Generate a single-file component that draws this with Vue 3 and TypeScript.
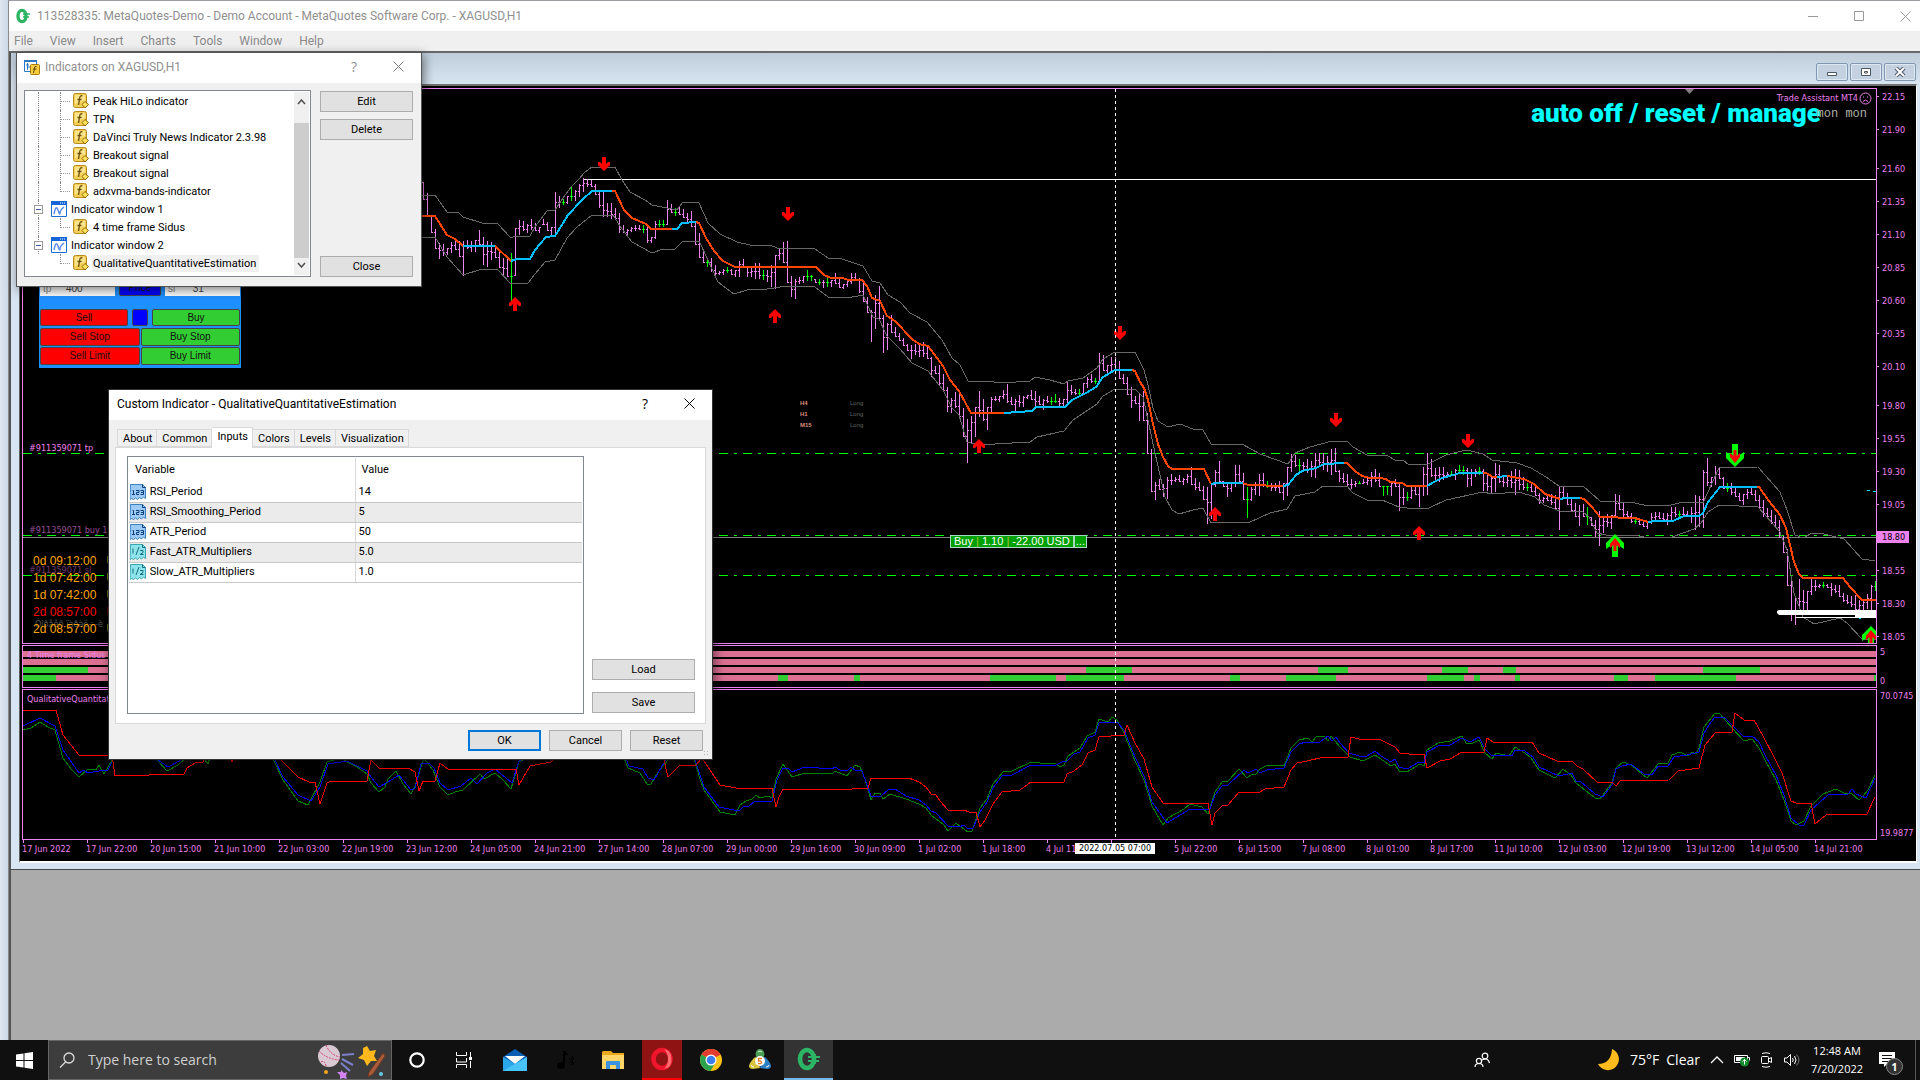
<script setup lang="ts">
import { ref } from 'vue'

type Run = [colour: 'down' | 'up', points: string]

const menus = ['File', 'View', 'Insert', 'Charts', 'Tools', 'Window', 'Help']

const priceLabels = [
  '22.15', '21.90', '21.60', '21.35', '21.10', '20.85', '20.60', '20.35', '20.10',
  '19.80', '19.55', '19.30', '19.05', '18.80', '18.55', '18.30', '18.05',
]
const wideSteps = ['21.60', '19.80']

const timeLabels = [
  '17 Jun 2022', '17 Jun 22:00', '20 Jun 15:00', '21 Jun 10:00', '22 Jun 03:00', '22 Jun 19:00',
  '23 Jun 12:00', '24 Jun 05:00', '24 Jun 21:00', '27 Jun 14:00', '28 Jun 07:00', '29 Jun 00:00',
  '29 Jun 16:00', '30 Jun 09:00', '1 Jul 02:00', '1 Jul 18:00', '4 Jul 11:00', '', '5 Jul 22:00',
  '6 Jul 15:00', '7 Jul 08:00', '8 Jul 01:00', '8 Jul 17:00', '11 Jul 10:00', '12 Jul 03:00',
  '12 Jul 19:00', '13 Jul 12:00', '14 Jul 05:00', '14 Jul 21:00',
]

// High-low pairs, one bar every four units; "g" marks a doji bar.
const barData = `182-200 193-216 216-233 229-249 243-259 244-256 248-255 242-253 240-250 241-257 241-276 240-249
241-252 240-252 230-245 237-265 241-267 242-260 245-258 250-268 258-275 258-277 253-301g 228-276 220-235 221-231
224-233 219-230 223-231 227-233 219-225 222-231 227-237 192-235 196-208 199-205g 196-204 187-201g 190-201 184-197
178-192 179-187 180-187 184-195 192-208 192-217 203-217 203-219 208-219 213-233 225-233 229-235 227-232 225-231
225-230 225-233g 227-243 237-243 221-239 220-227g 220-227g 200-225 204-213 208-216g 206-215 209-218 213-223 211-227
221-245 233-258 250-263 258-267g 258-272 265-275 271-275 269-275 267-273g 269-275 270-277 261-277 259-268 267-277
267-277 263-279 263-279 270-280g 270-282 265-287 255-289 249-260 242-263 241-283 276-297 279-299 277-284 276-283
270-281g 275-281g 279-283 279-285g 280-288 277-287g 280-287 273-284 278-288 284-289 281-287 273-284 273-280 278-293
280-302 297-313 310-342 295-329 286-319 315-353 323-350 315-333 327-337 333-341 338-346 344-351 345-359 344-355
344-357 342-357 347-359 357-377 366-374 365-386 374-391 387-412 398-413 392-408 394-417 408-437 419-463 416-443
407-437 391-417 399-421 407-430 397-413 396-401 396-402 390-399 384-403 397-405 399-412 395-407 396-407 395-399
390-400 391-407 396-405 399-410 396-403 397-405g 394-403g 398-407 399-407 382-403 385-395 389-395 389-397g 383-395
377-388 374-383 378-384g 353-383 355-371 365-374 357-371 357-370 361-379 374-384 377-395 387-408 396-404 393-421
391-421 413-454 449-492 482-500 479-490 484-497 477-499 474-485 477-482 475-482 478-485 474-483 467-485 478-490
482-491 486-500 487-524 484-519 470-487 461-482 481-487 483-497 483-492 465-487 465-482 473-500 487-518g 487-501
482-495 474-496 473-487 481-488g 483-491 483-491 481-493 483-500 467-496 454-472 455-467 459-471g 462-472 459-473
461-477 453-478 453-467 453-470 456-472 449-475 448-472 470-482 473-483 474-487 479-489 481-487 481-484g 479-484
478-485 472-487 469-482 473-487 486-496g 486-495g 483-496 479-487 483-511 488-505 492-501g 487-499 485-495 486-507
467-496 453-495 459-477 468-482 467-482 467-480 472-477 471-476g 469-480 465-474g 466-475g 468-487 469-486 469-477
467-475g 469-491 475-491 477-494 463-492 465-483 475-487 477-487 471-488 469-495 470-490 477-490 483-491g 484-492
486-496 493-504 497-503 495-501 494-505 495-509 487-530 486-498 493-505 497-512 503-517 505-526 504-517 507-525g
517-526 520-537 511-546 516-533 514-527 515-529 494-518 495-510 503-517 511-517 513-523 517-524g 519-525 522-527
522-529 513-524 512-521 512-519 513-522 513-525 507-522 507-517 511-517g 507-515 511-517 507-523 495-530 496-527
470-528 458-486 477-487 466-485 468-479 477-489 483-492g 483-495 486-497 493-501 494-505 489-499 488-495 490-501
495-508 500-517 508-517 510-524 515-528 520-538 536-553 549-586 577-621 598-625 579-607 590-612 591-612 578-595
580-591 584-588 582-588g 584-588 583-596 585-593 585-597 593-602 595-604 596-607 595-613 600-618 600-610 594-609
585-610 581-591g`

function buildBars(source: string) {
  const bars = source.trim().split(/\s+/).map((item) => {
    const [high, low] = item.replace('g', '').split('-').map(Number)
    return { high, low, doji: item.endsWith('g') }
  })
  const paths = { plain: '', doji: '' }
  let open = bars[0].high
  bars.forEach((bar, i) => {
    const next = bars[i + 1] ?? bar
    const x = 423 + 4 * i
    const clamp = (y: number) => Math.round(Math.min(bar.low - 1, Math.max(bar.high, y)))
    const from = clamp(open)
    const to = bar.doji ? from : clamp((next.high + next.low) / 2)
    paths[bar.doji ? 'doji' : 'plain'] +=
      `M${x} ${bar.high}h1V${bar.low}h-1zM${x - 1} ${from}h1v1h-1zM${x + 1} ${to}h1v1h-1z`
    open = to
  })
  return paths
}
const bars = buildBars(barData)

const average: Run[] = [
  ['down', '421,216 435,216 447,235 455,239 463,246'],
  ['up', '463,246 495,246'],
  ['down', '495,246 511,261'],
  ['up', '511,261 517,259 530,259 535,250 546,237 555,236 568,215 582,200 592,191 612,191'],
  ['down', '612,191 615,191 624,210 632,218 646,224 651,229 672,229'],
  ['up', '672,229 677,229 682,223 696,222'],
  ['down', '696,222 699,223 706,238 714,251 723,261 735,267 816,267 824,275 831,278 843,278 848,280 862,280 867,286 872,298 880,301 887,316 895,321 912,339 919,344 928,346 943,366 950,380 959,391 971,413 1004,413'],
  ['up', '1004,413 1032,411 1036,407 1065,407 1072,400 1086,393 1096,387 1103,377 1115,370 1132,370'],
  ['down', '1132,370 1135,371 1140,382 1144,388 1148,400 1153,424 1158,444 1163,457 1168,466 1172,469 1204,469 1211,484'],
  ['up', '1211,484 1216,483 1243,483'],
  ['down', '1243,483 1248,485 1283,486'],
  ['up', '1283,486 1288,485 1296,475 1302,471 1316,468 1324,464 1344,463'],
  ['down', '1344,463 1347,463 1355,471 1362,476 1370,478 1380,478 1386,479 1390,482 1402,483 1407,486 1427,486'],
  ['up', '1427,486 1434,482 1442,478 1453,475 1460,473 1483,473'],
  ['down', '1483,473 1486,473 1493,477 1497,477'],
  ['up', '1497,477 1507,476'],
  ['down', '1507,476 1524,479 1534,484 1545,494 1560,499'],
  ['up', '1560,499 1565,498 1580,498'],
  ['down', '1580,498 1584,499 1592,507 1600,517 1635,518 1648,522'],
  ['up', '1648,522 1655,521 1673,521 1684,516 1699,516 1703,513 1708,502 1720,487 1757,487'],
  ['down', '1757,487 1759,487 1769,501 1780,515 1786,528 1790,545 1794,562 1799,574 1803,578 1843,578 1850,587 1862,600 1876,600'],
]

const upperBand =
  '421,195 435,195 447,212 458,212 463,217 482,223 497,223 511,238 515,236 530,236 535,227 547,211 555,210 563,198 572,186 579,179 585,172 592,167 615,167 622,180 630,192 645,200 652,205 677,210 683,202 699,203 708,223 720,234 737,242 750,245 770,245 777,248 815,249 828,258 842,259 863,266 872,281 880,283 888,295 900,302 910,313 927,322 942,340 952,358 960,365 968,381 985,381 1003,383 1030,381 1035,377 1050,380 1064,384 1068,381 1083,378 1097,368 1103,359 1115,352 1135,352 1144,370 1148,385 1153,408 1158,421 1168,427 1180,424 1193,429 1203,430 1211,444 1242,444 1260,454 1288,464 1295,453 1310,447 1332,441 1347,441 1353,447 1367,455 1388,456 1395,460 1404,461 1408,464 1428,464 1446,455 1462,451 1467,450 1483,454 1492,460 1517,463 1531,468 1546,477 1559,486 1583,486 1600,501 1635,503 1648,506 1671,505 1683,502 1703,503 1712,483 1719,468 1758,467 1780,492 1787,510 1795,535 1803,538 1812,533 1824,534 1844,539 1862,559 1875,561'
const lowerBand =
  '421,237 435,237 447,257 463,275 482,269 497,269 511,284 528,283 535,274 545,262 555,260 567,238 577,227 592,215 613,215 622,229 632,242 652,253 663,249 675,249 683,241 699,241 708,260 718,282 734,294 747,290 767,289 787,286 815,287 828,297 847,298 863,295 873,317 879,319 887,336 900,349 912,363 928,371 943,390 952,408 959,415 967,442 975,444 995,444 1030,442 1037,437 1064,431 1073,420 1097,404 1103,396 1115,389 1135,389 1143,397 1148,420 1155,453 1165,497 1172,510 1179,514 1193,510 1203,508 1211,523 1250,522 1270,513 1287,509 1295,496 1315,492 1323,486 1347,486 1353,493 1367,500 1382,500 1399,507 1407,508 1429,508 1446,500 1483,492 1492,494 1519,492 1535,497 1544,505 1560,511 1583,512 1589,517 1597,533 1606,535 1635,535 1648,538 1672,537 1694,529 1701,523 1708,512 1719,505 1758,507 1780,532 1787,550 1794,593 1803,617 1814,624 1840,618 1847,623 1862,639 1876,640'

const redArrows = [
  [604, 164, 180], [788, 214, 180], [1120, 333, 180], [1336, 420, 180], [1468, 441, 180],
  [515, 304, 0], [775, 316, 0], [979, 446, 0], [1215, 514, 0], [1419, 533, 0],
]
const signalArrows = [[1735, 455, 180], [1615, 546, 0], [1871, 638, 0]]

const tradeLevels = [453.5, 535.5, 575.5]

const sidusUp = [
  { y: 667, spans: [[23, 88], [1086, 1132], [1318, 1348], [1442, 1468], [1503, 1516], [1703, 1760]] },
  {
    y: 675,
    spans: [[23, 56], [778, 788], [854, 860], [990, 1056], [1066, 1124], [1230, 1240], [1286, 1336],
      [1427, 1464], [1474, 1480], [1515, 1520], [1614, 1628], [1655, 1736], [1874, 1877]],
  },
]

const qqeRed =
  '23,710 56,710 63,735 79,755 112,755 115,776 184,774 187,768 195,763 203,762 215,735 230,735 232,762 236,740 275,740 282,761 298,777 309,782 315,782 320,804 327,783 331,781 367,781 371,760 379,768 408,768 415,772 419,791 423,781 435,781 440,763 448,769 516,769 519,785 530,766 551,762 570,740 640,735 664,760 668,777 679,766 696,765 702,758 720,785 736,788 772,788 776,807 779,797 783,789 852,789 868,788 871,778 909,778 919,782 926,787 931,794 936,795 940,801 948,810 964,810 969,812 976,812 980,827 985,820 993,804 1002,792 1020,790 1031,782 1064,782 1067,774 1074,771 1082,765 1088,753 1095,750 1099,737 1124,735 1127,725 1135,743 1144,759 1152,787 1163,803 1208,803 1212,825 1215,813 1222,806 1228,805 1239,792 1260,792 1265,789 1284,787 1291,770 1297,763 1307,761 1324,757 1348,757 1351,737 1359,739 1379,739 1395,747 1400,753 1409,754 1424,754 1427,768 1440,761 1450,759 1462,752 1484,752 1487,738 1493,742 1532,742 1539,753 1557,761 1572,761 1577,766 1583,769 1597,782 1612,782 1616,786 1620,781 1669,780 1678,771 1699,768 1705,745 1715,733 1732,732 1735,713 1744,720 1754,720 1763,736 1774,757 1782,773 1791,801 1796,803 1811,803 1815,824 1826,815 1834,814 1867,814 1875,797'
const qqeBlue =
  '23,726 40,718 55,726 63,750 79,773 84,770 88,773 99,771 108,770 113,760 125,745 150,750 158,760 168,767 181,760 200,740 260,735 275,760 283,777 298,795 311,801 320,787 328,764 347,761 367,771 371,777 379,787 388,782 399,775 411,790 415,788 421,764 429,763 434,768 440,783 448,790 461,786 471,778 477,784 487,773 495,769 512,783 519,761 560,735 620,745 629,766 643,769 648,778 654,780 665,761 680,745 695,760 700,775 704,787 719,807 739,811 743,807 749,806 755,801 772,801 777,780 783,768 788,768 792,772 805,767 832,769 835,767 840,770 847,771 851,767 855,770 862,771 871,796 881,796 888,790 895,789 906,796 919,800 926,805 931,811 936,813 948,826 959,827 964,825 968,829 973,828 980,812 987,802 993,788 1002,776 1012,775 1031,765 1056,765 1062,762 1067,761 1074,754 1080,752 1088,738 1095,735 1099,723 1117,722 1124,730 1135,757 1144,776 1152,802 1167,823 1190,809 1210,809 1215,795 1222,786 1228,785 1244,770 1248,773 1256,769 1260,773 1267,770 1284,768 1291,752 1299,744 1306,742 1320,742 1328,736 1332,741 1336,737 1340,743 1349,753 1359,756 1367,756 1375,751 1381,756 1391,762 1395,759 1399,767 1407,769 1419,762 1424,763 1427,752 1440,745 1450,745 1462,738 1470,742 1479,737 1485,749 1492,756 1508,755 1512,756 1515,750 1525,751 1533,757 1539,767 1559,776 1572,773 1576,781 1580,781 1595,794 1603,797 1612,785 1616,769 1622,766 1631,764 1644,774 1652,775 1658,766 1668,766 1674,757 1687,755 1699,752 1704,733 1709,725 1715,717 1724,717 1732,725 1744,737 1752,736 1759,742 1765,755 1776,775 1784,795 1791,818 1799,825 1804,825 1811,810 1828,795 1848,794 1852,789 1856,794 1866,798 1875,778'
const qqeGreen =
  '23,730 31,728 40,722 48,727 55,730 63,758 72,770 79,777 88,769 96,770 99,765 104,774 112,760 125,750 150,754 158,761 167,771 178,765 200,745 205,760 208,764 212,750 260,738 274,761 283,780 298,801 308,805 320,782 327,762 340,758 357,767 367,774 371,783 379,792 385,787 388,779 396,771 403,784 411,794 415,786 424,758 433,770 440,787 448,795 455,792 463,790 480,774 484,779 495,773 503,780 511,789 519,762 560,740 620,748 628,768 640,773 647,784 651,784 658,772 668,760 690,748 696,765 700,779 704,790 720,812 735,815 740,805 746,801 752,799 756,795 760,798 768,796 772,798 776,779 783,764 792,777 805,773 832,774 835,771 847,776 855,765 860,767 865,779 871,800 875,793 880,793 883,799 890,794 906,799 919,804 926,808 931,815 944,825 948,831 956,823 968,832 972,831 980,808 987,799 993,784 1003,772 1012,771 1031,762 1040,763 1055,763 1060,767 1064,765 1068,756 1080,748 1087,736 1095,732 1099,719 1108,722 1112,717 1117,720 1124,733 1135,761 1144,780 1152,806 1163,825 1168,818 1184,809 1190,804 1202,807 1208,814 1215,792 1222,782 1228,781 1239,769 1247,778 1252,774 1256,774 1260,769 1268,765 1284,766 1291,748 1299,740 1308,738 1312,742 1316,737 1324,736 1328,741 1331,736 1340,747 1350,757 1363,761 1375,755 1391,766 1395,764 1399,771 1407,772 1420,764 1424,766 1427,750 1438,743 1450,741 1462,736 1466,743 1471,744 1479,740 1485,753 1492,759 1496,753 1509,756 1515,747 1525,753 1531,758 1539,770 1555,778 1563,769 1571,775 1576,783 1595,798 1600,799 1612,783 1616,768 1623,762 1631,765 1647,778 1658,764 1668,763 1672,755 1680,752 1688,756 1692,752 1696,754 1699,748 1704,727 1715,713 1720,714 1732,728 1744,741 1752,739 1759,748 1765,760 1776,780 1784,800 1791,821 1796,825 1804,821 1811,806 1823,794 1836,789 1844,793 1852,794 1859,800 1863,796 1868,790 1875,775'

const countdowns = [
  { text: '0d 09:12:00   U', late: false },
  { text: '1d 07:42:00   U', late: false },
  { text: '1d 07:42:00   U', late: false },
  { text: '2d 08:57:00   U', late: true },
  { text: '2d 08:57:00   U', late: false },
]

const frames = ['H4', 'H1', 'M15']

const tree = [
  { kind: 'item', name: 'Peak HiLo indicator' },
  { kind: 'item', name: 'TPN' },
  { kind: 'item', name: 'DaVinci Truly News Indicator 2.3.98' },
  { kind: 'item', name: 'Breakout signal' },
  { kind: 'item', name: 'Breakout signal' },
  { kind: 'item last', name: 'adxvma-bands-indicator' },
  { kind: 'group', name: 'Indicator window 1' },
  { kind: 'item last', name: '4 time frame Sidus' },
  { kind: 'group end', name: 'Indicator window 2' },
  { kind: 'item last closed', name: 'QualitativeQuantitativeEstimation' },
]
const selected = ref(9)

const tabs = ['About', 'Common', 'Inputs', 'Colors', 'Levels', 'Visualization']
const activeTab = ref('Inputs')

const inputs = [
  { name: 'RSI_Period', value: '14', kind: 'int' },
  { name: 'RSI_Smoothing_Period', value: '5', kind: 'int' },
  { name: 'ATR_Period', value: '50', kind: 'int' },
  { name: 'Fast_ATR_Multipliers', value: '5.0', kind: 'real' },
  { name: 'Slow_ATR_Multipliers', value: '1.0', kind: 'real' },
]

const tp = ref('400')
const sl = ref('31')
</script>

<template>
  <div class="desktop">
    <div class="work">
      <div class="edge"></div>
      <main class="app">
        <header class="titlebar">
          <svg class="logo" viewBox="0 0 16 16" width="16" height="16">
            <ellipse cx="7" cy="8" rx="4" ry="5.6" fill="none" stroke="#2db563" stroke-width="3.4" />
            <path d="M8 6h7M8 9h6" stroke="#2db563" stroke-width="1.6" />
          </svg>
          <h1>113528335: MetaQuotes-Demo - Demo Account - MetaQuotes Software Corp. - XAGUSD,H1</h1>
          <div class="caption">
            <button aria-label="Minimize"><svg width="10" height="10"><path d="M0 5.5h10" stroke="#999" /></svg></button>
            <button aria-label="Maximize"><svg width="10" height="10"><path d="M.5.5h9v9h-9z" fill="none" stroke="#999" /></svg></button>
            <button aria-label="Close"><svg width="11" height="11"><path d="M.5.5l10 10M10.500.5l-10 10" stroke="#999" /></svg></button>
          </div>
        </header>
        <nav class="menubar">
          <button v-for="menu in menus" :key="menu">{{ menu }}</button>
        </nav>

        <div class="mdi">
          <section class="child">
            <div class="child-title">
              <button aria-label="Minimize chart"><svg width="12" height="10"><path d="M1.500 5.500h9v3h-9z" fill="#fff" stroke="#4d5664" /></svg></button>
              <button aria-label="Restore chart"><svg width="12" height="10"><path d="M1.500 1.500h9v7h-9z" fill="#fff" stroke="#4d5664" /><path d="M4.500 4.500h3v1.500h-3z" fill="#fff" stroke="#4d5664" /></svg></button>
              <button aria-label="Close chart"><svg width="12" height="10"><path d="M2 1l8 8M10 1l-8 8" stroke="#4d5664" stroke-width="4" /><path d="M2 1l8 8M10 1l-8 8" stroke="#fff" stroke-width="2" /></svg></button>
            </div>

            <div class="chart">
              <div class="row price">
                <div class="pane">
                  <svg class="canvas" viewBox="23 89 1853 554" preserveAspectRatio="none">
                    <path d="M1685 89h9l-4.500 5z" fill="#808080" />
                    <g stroke="#00ff00" stroke-dasharray="9 6 3 6">
                      <line v-for="y in tradeLevels" :key="y" x1="23" x2="1876" :y1="y" :y2="y" />
                    </g>
                    <line x1="23" x2="1876" y1="537.5" y2="537.5" stroke="#808080" />
                    <line x1="583" x2="1876" y1="179.5" y2="179.5" stroke="#fff" />
                    <path :d="bars.plain" fill="#ee82ee" shape-rendering="crispEdges" />
                    <path :d="bars.doji" fill="#00ff00" shape-rendering="crispEdges" />
                    <g fill="none" stroke="#696969" shape-rendering="crispEdges">
                      <polyline :points="upperBand" />
                      <polyline :points="lowerBand" />
                    </g>
                    <g fill="none" stroke-width="2" shape-rendering="crispEdges">
                      <polyline
                        v-for="([trend, points], i) in average" :key="i" :points="points"
                        :stroke="trend === 'up' ? '#00bfff' : '#ff4500'"
                      />
                    </g>
                    <path d="M1779 610h97v8h-21v-3h-76l-2-2v-2z" fill="#fff" />
                    <path d="M1795 617.500h60" stroke="#fff" />
                    <path d="M1867 490.500h3M1873 491.500h3M1859 618.500h2" stroke="#00e5ff" />
                    <path
                      v-for="([x, y, turn], i) in redArrows" :key="i" fill="#ff0000"
                      d="M0-7L6-1V2H4L2 0V7H-2V0L-4 2H-6V-1z" :transform="`translate(${x} ${y}) rotate(${turn})`"
                    />
                    <g v-for="([x, y, turn], i) in signalArrows" :key="i" :transform="`translate(${x} ${y}) rotate(${turn})`">
                      <path d="M0-12L9-3V3L3-1V11H-3V-1L-9 3V-3z" fill="#00ff00" />
                      <path d="M0-8L5-2V2L1.500-1V5H-1.500V-1L-5 2V-2z" fill="#ff0000" />
                    </g>
                    <path d="M1115.500 89V643" stroke="#fff" stroke-dasharray="3 3" />
                  </svg>

                  <form class="ticket" @submit.prevent>
                    <div class="ticket-row">
                      <label class="field">tp <input v-model="tp" aria-label="Take profit" /></label>
                      <button class="blue">Price</button>
                      <label class="field">sl <input v-model="sl" aria-label="Stop loss" /></label>
                    </div>
                    <div class="ticket-row first">
                      <button class="sell">Sell</button>
                      <button class="blue small" aria-label="Mode"></button>
                      <button class="buy">Buy</button>
                    </div>
                    <div class="ticket-row pair">
                      <button class="sell">Sell Stop</button>
                      <button class="buy">Buy Stop</button>
                    </div>
                    <div class="ticket-row pair">
                      <button class="sell">Sell Limit</button>
                      <button class="buy">Buy Limit</button>
                    </div>
                  </form>

                  <span class="order tp">#911359071 tp</span>
                  <span class="order open">#911359071 buy 1</span>
                  <span class="order sl">#911359071 sl</span>
                  <span class="order ghost">Ôîðåêñ ïàðàë÷-è</span>
                  <ul class="countdowns">
                    <li v-for="(row, i) in countdowns" :key="i" :class="{ late: row.late }">{{ row.text }}</li>
                  </ul>

                  <dl class="frames">
                    <template v-for="frame in frames" :key="frame">
                      <dt>{{ frame }}</dt>
                      <dd>Long</dd>
                    </template>
                  </dl>

                  <div class="position">
                    <span>Buy <i>|</i> 1.10 <i>|</i> -22.00 USD</span>
                    <span>...</span>
                  </div>

                  <p class="expert">
                    Trade Assistant MT4
                    <svg width="13" height="13" viewBox="0 0 13 13" fill="none" stroke="#ee82ee">
                      <circle cx="6.500" cy="6.500" r="5.500" /><path d="M4 9.500q2.500-3 5 0M4 5h1M8 5h1" />
                    </svg>
                  </p>
                  <p class="headline">auto off / reset / manage</p>
                  <p class="weekday">mon mon</p>
                </div>
                <ol class="scale prices">
                  <li v-for="price in priceLabels" :key="price" :class="{ wide: wideSteps.includes(price), bid: price === '18.80' }">
                    <span>{{ price }}</span>
                  </li>
                </ol>
              </div>

              <div class="row sidus">
                <div class="pane">
                  <svg class="canvas" viewBox="23 646 1853 41" preserveAspectRatio="none">
                    <rect v-for="y in [651, 659, 667, 675]" :key="y" x="23" :y="y" width="1853" height="6" fill="#db7093" />
                    <template v-for="row in sidusUp" :key="row.y">
                      <rect v-for="[from, to] in row.spans" :key="from" :x="from" :y="row.y" :width="to - from" height="6" fill="#32cd32" />
                    </template>
                    <path d="M1115.500 646V687" stroke="#fff" stroke-dasharray="3 3" />
                  </svg>
                  <span class="pane-name">4 Time frame Sidus</span>
                </div>
                <ol class="scale ends"><li>5</li><li>0</li></ol>
              </div>

              <div class="row qqe">
                <div class="pane">
                  <svg class="canvas" viewBox="23 690 1853 149" preserveAspectRatio="none">
                    <g fill="none" shape-rendering="crispEdges">
                      <polyline :points="qqeGreen" stroke="#008000" />
                      <polyline :points="qqeBlue" stroke="#0000ff" />
                      <polyline :points="qqeRed" stroke="#ff0000" />
                    </g>
                    <path d="M1115.500 690V839" stroke="#fff" stroke-dasharray="3 3" />
                  </svg>
                  <span class="pane-name">QualitativeQuantitativeEstimation</span>
                </div>
                <ol class="scale ends"><li>70.0745</li><li>19.9877</li></ol>
              </div>

              <div class="times">
                <ol>
                  <li v-for="(time, i) in timeLabels" :key="i">{{ time }}</li>
                </ol>
                <span class="cursor-time">2022.07.05 07:00</span>
              </div>
            </div>
          </section>
        </div>
      </main>
    </div>

    <section class="dialog list-dialog" aria-label="Indicators">
      <header>
        <svg width="16" height="16" viewBox="0 0 16 16">
          <path d="M.500 1.500h12v11h-12z" fill="#fff" stroke="#2b78c5" /><path d="M0 1h13v2H0z" fill="#2b78c5" />
          <path d="M2 6h3M3.500 4v7M3 8h3" stroke="#2b78c5" />
          <rect x="6.500" y="5.500" width="9" height="10" rx="1" fill="#f6cf3c" stroke="#a77a10" />
          <path d="M12.500 7.500q-2-.8-2 1.500L9.500 14M9 10h3.500" fill="none" stroke="#5c3f00" />
        </svg>
        <h2>Indicators on XAGUSD,H1</h2>
        <button class="help" aria-label="Help">?</button>
        <button class="close" aria-label="Close"><svg width="11" height="11"><path d="M.5.5l10 10M10.500.5l-10 10" stroke="#777" /></svg></button>
      </header>
      <div class="list-body">
        <div class="tree">
          <ul>
            <li v-for="(node, i) in tree" :key="i" :class="node.kind">
              <template v-if="node.kind.startsWith('group')">
                <button class="fold" aria-label="Collapse"></button>
                <svg width="16" height="16" viewBox="0 0 16 16">
                  <path d="M.500.500h15v15H.500z" fill="#fff" stroke="#1b6fd0" /><path d="M0 0h16v4H0z" fill="#1565d8" />
                  <path d="M9 2h1M11 2h1M13 2h1" stroke="#fff" />
                  <path d="M3 13Q5 3 7 9t2 3 4-6" fill="none" stroke="#5b8def" stroke-width="1.500" />
                </svg>
              </template>
              <svg v-else width="16" height="16" viewBox="0 0 16 16">
                <rect x=".500" y=".500" width="13" height="14" rx="2" fill="#f3cf55" stroke="#b88a1c" />
                <path d="M2 2h10v5L2 11z" fill="#fbe48e" />
                <path d="M9.500 3q-2.500-1-2.800 2L5.500 12M4.500 6.500h4" fill="none" stroke="#6a4c05" stroke-width="1.300" />
                <path d="M12 8.500l3.500 3-3.500 3.500-3-3.500z" fill="#ffe15a" stroke="#8c6508" />
              </svg>
              <button class="node" :class="{ selected: selected === i }" @click="selected = i">{{ node.name }}</button>
            </li>
          </ul>
          <div class="scrollbar">
            <svg width="9" height="6"><path d="M1 5l3.500-4L8 5" fill="none" stroke="#505050" stroke-width="1.500" /></svg>
            <div class="thumb"></div>
            <svg width="9" height="6"><path d="M1 1l3.500 4L8 1" fill="none" stroke="#505050" stroke-width="1.500" /></svg>
          </div>
        </div>
        <div class="side">
          <button class="push">Edit</button>
          <button class="push">Delete</button>
          <button class="push bottom">Close</button>
        </div>
      </div>
    </section>

    <section class="dialog input-dialog" aria-label="Custom indicator">
      <header>
        <h2>Custom Indicator - QualitativeQuantitativeEstimation</h2>
        <button class="help" aria-label="Help">?</button>
        <button class="close" aria-label="Close"><svg width="11" height="11"><path d="M.5.5l10 10M10.500.5l-10 10" stroke="#000" /></svg></button>
      </header>
      <div class="tabs">
        <button v-for="tab in tabs" :key="tab" :class="{ active: tab === activeTab }" @click="activeTab = tab">{{ tab }}</button>
      </div>
      <div class="sheet">
        <div class="grid">
          <table>
            <thead>
              <tr><th scope="col">Variable</th><th scope="col">Value</th></tr>
            </thead>
            <tbody>
              <tr v-for="input in inputs" :key="input.name">
                <td>
                  <svg width="16" height="16" viewBox="0 0 16 16" :class="input.kind">
                    <path class="page" d="M.500.500h12l3 3v11l-2-1.500-2 2-2-1.500-2 2-2-1.500-2 1.500-2-1-1.500 1z" />
                    <path class="fold-line" d="M12.500.500v3h3" />
                    <path v-if="input.kind === 'int'" class="glyph" d="M2.500 6.500h1v4M2 10.500h3M6 6.500h3v2H6.500v2H9M10.500 6.500h3v4h-3M11 8.500h2.500" />
                    <path v-else class="glyph" d="M3 4.500v5M9 3L6 11M10 6.500h3v2l-3 2h3.500" />
                  </svg>
                  {{ input.name }}
                </td>
                <td>{{ input.value }}</td>
              </tr>
            </tbody>
          </table>
        </div>
        <div class="side">
          <button class="push">Load</button>
          <button class="push">Save</button>
        </div>
      </div>
      <footer>
        <button class="push default">OK</button>
        <button class="push">Cancel</button>
        <button class="push">Reset</button>
        <span class="grip"></span>
      </footer>
    </section>

    <footer class="taskbar">
      <button class="task start" aria-label="Start">
        <svg width="17" height="17"><path d="M0 2.500l7.500-1V8H0zM8.500 1.300L17 0v8H8.500zM0 9h7.500v6.500L0 14.500zM8.500 9H17v8l-8.500-1.300z" fill="#fff" /></svg>
      </button>
      <label class="search">
        <svg width="18" height="18"><circle cx="11" cy="7" r="5" fill="none" stroke="#ddd" stroke-width="1.300" /><path d="M7.500 11L2 16.500" stroke="#ddd" stroke-width="1.300" /></svg>
        <input type="text" placeholder="Type here to search" aria-label="Search" />
        <svg width="72" height="38" viewBox="0 0 72 38">
          <circle cx="12" cy="15" r="11" fill="#d9c9d2" />
          <path d="M2 10q8 8 20 9M9 4q4 10 14 12M4 21q4-2 5 4" fill="none" stroke="#d6437c" stroke-dasharray="2 1" />
          <path d="M25 14l12-1M25 18l11 6M24 22l9 8" stroke="#7a80c9" stroke-width="2" />
          <path d="M50 5l3 5 6-1-2 6 3 5-6 0-4 5-3-6-6-2 5-4 0-6z" fill="#ffb81c" />
          <path d="M66 12l2 3-12 18-5 3 1-5z" fill="#a85c3b" stroke="#6f3722" />
          <path d="M24 29l3 3 3-1-1 4 1 3-4-1-3 1 0-4-3-3 4 0z" fill="#d483f3" />
          <circle cx="9" cy="31" r="2" fill="#f5a623" /><circle cx="64" cy="33" r="2" fill="#65cbe5" />
        </svg>
      </label>
      <button class="task" aria-label="Cortana"><svg width="16" height="16"><circle cx="8" cy="8" r="6.700" fill="none" stroke="#fff" stroke-width="2.200" /></svg></button>
      <button class="task view" aria-label="Task view">
        <svg width="18" height="16" fill="none" stroke="#fff"><path d="M1.500 0v3.500h10V0M1.500 16v-3.500h10V16M1.500 6v4h10v-4M15.500 0v5M15.500 9v7" /><rect x="14.500" y="5.500" width="2" height="2" fill="#fff" /></svg>
      </button>
      <button class="task mail" aria-label="Mail">
        <svg width="24" height="24"><path d="M0 9L12 1l12 8v14H0z" fill="#0a5fb4" /><path d="M2 8h20l-10 8z" fill="#fff" /><path d="M0 9l12 7L24 9v14H0z" fill="#2aa6e8" /><path d="M0 23L24 9v14z" fill="#47c3f7" /><path d="M4 8h16l-8 7z" fill="#fff" /></svg>
      </button>
      <button class="task music" aria-label="Music">
        <svg width="20" height="20"><path d="M8 1h3q1 3 2 4h-3v10q0 4-4 4t-4-3 4-4h2z" fill="#000" /><path d="M14 8l5 5-2 2V6l2 2-5 5" stroke="#000" fill="none" /></svg>
      </button>
      <button class="task files" aria-label="File Explorer">
        <svg width="22" height="20"><path d="M0 2l1-1h8l2 2h11v16H0z" fill="#e8a91c" /><path d="M0 5h22v14H0z" fill="#ffd667" /><path d="M4 19v-7q0-1 1-1h12q1 0 1 1v7h-4v-4H8v4z" fill="#3c92dc" /></svg>
      </button>
      <button class="task opera" aria-label="Opera">
        <svg width="24" height="24"><ellipse cx="12" cy="12" rx="8.500" ry="9" fill="none" stroke="#f0152c" stroke-width="4.500" /><path d="M14 2.500q7 0 7.500 9.500T14 21.500q4-3 4-9.500T14 2.500z" fill="#ff6b70" /></svg>
      </button>
      <button class="task" aria-label="Chrome">
        <svg width="22" height="22" viewBox="0 0 22 22"><circle cx="11" cy="11" r="11" fill="#fbc116" /><path d="M11 11L1.500 5.500A11 11 0 0 1 20.500 5.500z" fill="#e33b2e" /><path d="M11 11L1.500 5.500A11 11 0 0 0 10.500 22l5-8.500z" fill="#2ba24c" /><circle cx="11" cy="11" r="5.500" fill="#fff" /><circle cx="11" cy="11" r="4.300" fill="#3b7ded" /></svg>
      </button>
      <button class="task" aria-label="MetaTrader 5">
        <svg width="22" height="22" viewBox="0 0 22 22"><path d="M11 0q4 0 4.500 5l-1 4h-7l-1-4Q7 0 11 0z" fill="#4b9d56" /><path d="M9 3q2-2 4 0" stroke="#d9efdc" fill="none" /><path d="M6 8q-6 6-6 9 0 3 4 3l7-1-2-9z" fill="#d7c43c" /><path d="M16 8q6 6 6 9 0 3-4 3l-7-1 2-9z" fill="#2d7fc4" /><path d="M2 16q0 2 3 2M20 16q0 2-3 2" stroke="#f4f4f4" fill="none" /><circle cx="11" cy="12" r="5" fill="#fff" /><path d="M13 9.500h-3.500v2.500q3-.5 3 1.300T9 14.500" fill="none" stroke="#e07b24" stroke-width="1.300" /></svg>
      </button>
      <button class="task current" aria-label="MetaTrader terminal">
        <svg width="24" height="24"><ellipse cx="10" cy="12" rx="7" ry="9" fill="none" stroke="#2bb565" stroke-width="4.600" /><path d="M11 10h12M11 14h11M18 7v10" stroke="#2bb565" stroke-width="2" /></svg>
      </button>

      <div class="tray">
        <svg class="people" width="16" height="16" fill="none" stroke="#fff" stroke-width="1.200"><circle cx="11" cy="4" r="2.800" /><circle cx="5" cy="9" r="2.600" /><path d="M1 15q0-3.500 4-3.500T9 15M8 8q6-3 7.500 3" /></svg>
        <svg width="22" height="22"><path d="M14 0A11 11 0 1 1 0 15Q13 15 14 0z" fill="#fbbb1c" /></svg>
        <span class="weather">75°F&ensp;Clear</span>
        <svg width="14" height="8"><path d="M1 7l6-6 6 6" fill="none" stroke="#fff" stroke-width="1.300" /></svg>
        <svg width="16" height="14"><path d="M.500 2.500h13v7H.500zM14 4.500h1.500v3" fill="none" stroke="#fff" /><path d="M2 4h9v4H2z" fill="#fff" /><circle cx="10.500" cy="9" r="4.500" fill="#128a2c" /><path d="M10.500 6.500v5M8.500 8.500l2-2 2 2" stroke="#fff" fill="none" /></svg>
        <svg width="14" height="16" fill="none" stroke="#fff"><rect x="1.500" y="4.500" width="7" height="7" rx="1" /><path d="M8.500 7l3-1.500v5l-3-1.500M2 1.500q4-1.500 8 0M2 14.500q4 1.500 8 0" /></svg>
        <svg width="16" height="14" fill="none" stroke="#fff"><path d="M.500 5h2.500L6.500 1.500v11L3 9H.500zM8.500 5q1.500 2 0 4M10.500 3q3 4 0 8" /><path d="M12.500 1.500q5 5.500 0 11" stroke="#777" /></svg>
        <p class="clock">12:48 AM<br />7/20/2022</p>
        <div class="notice">
          <svg width="16" height="16"><path d="M0 0h16v12H8l-3 3v-3H0z" fill="#fff" /><path d="M3 3.500h10M3 6.500h10M3 9.500h6" stroke="#111" /></svg>
          <b>1</b>
        </div>
      </div>
    </footer>
  </div>
</template>

<style>
body { background: #101010; }
</style>

<style scoped>
* { box-sizing: border-box; }
h1, h2, p, ul, ol, dl, dd { margin: 0; padding: 0; font-weight: 400; list-style: none; }
button { margin: 0; padding: 0; border: 0; background: none; color: inherit; font: inherit; }
svg { display: block; flex: none; }

.desktop { position: relative; display: flex; flex-direction: column; min-height: 100vh; font: 11px/14px Roboto, sans-serif; color: #000; overflow: hidden; }
.work { flex: 1; display: flex; }
.edge { width: 8px; background: linear-gradient(90deg, #dde6f0, #cdd9e6); }
.app { flex: 1; min-width: 0; display: flex; flex-direction: column; border-left: 1px solid #8a8a8a; border-top: 1px solid #9a9da3; background: #fff; }

.titlebar { display: flex; align-items: center; height: 30px; padding-left: 6px; gap: 6px; }
.titlebar h1 { flex: 1; font: 12px/20px Roboto, sans-serif; color: #8f8f8f; }
.caption { display: flex; }
.caption button { width: 46px; height: 30px; display: grid; place-items: center; }
.caption button:last-child { width: 30px; margin-left: 8px; }
.menubar { display: flex; gap: 17px; height: 20px; padding-left: 5px; background: #f0f0f0; font: 12px/19px Roboto, sans-serif; color: #8a8a8a; }

.mdi { flex: 1; border-top: 2px solid #686868; border-left: 2px solid #555; background: #ababab; }
.child { padding-left: 8px; padding-right: 3px; padding-bottom: 6px; border-bottom: 1px solid #4a4a4a; background: #d7e4f1; }
.child-title { display: flex; justify-content: flex-end; gap: 2px; height: 31px; margin: 0 -3px 0 -8px; padding: 10px 4px 0 0; background: linear-gradient(#bfcddb, #d7e4f1); }
.child-title button { display: grid; place-items: center; width: 32px; height: 18px; border: 1px solid #8396b0; border-radius: 2px; box-shadow: inset 0 0 0 1px #dfe9f4; background: #c3d1e0; }

.chart { padding-top: 2px; border-top: 2px solid #707070; border-left: 1px solid #606060; border-bottom: 2px solid #fff; border-right: 1px solid #fff; background: #000; color: #ee82ee; font-family: "DejaVu Sans Condensed", Roboto, sans-serif; font-size: 9px; }
.row { display: flex; padding-left: 2px; }
.pane { position: relative; flex: 1; min-width: 0; border: 1px solid #ee82ee; }
.canvas { width: 100%; height: 100%; }
.price { height: 556px; }
.sidus { height: 43px; margin-top: 1px; }
.qqe { height: 151px; margin-top: 1px; }
.scale { width: 39px; }
.prices li { height: 33px; padding: 9px 0 0 0; position: relative; }
.prices li:first-child { margin-top: -7px; }
.prices li.wide { margin-top: 6px; }
.prices span { display: block; width: 32px; padding-left: 5px; line-height: 14px; }
.prices li::before { content: ""; float: left; width: 2px; height: 1px; margin-top: 6px; background: #ee82ee; }
.prices .bid span { height: 12px; line-height: 12px; background: #ee82ee; color: #000; }
.ends { display: flex; flex-direction: column; justify-content: space-between; padding-left: 3px; }

.times { position: relative; height: 21px; padding-left: 2px; }
.times ol { display: flex; overflow: hidden; height: 20px; }
.times li { flex: 0 0 64px; height: 20px; line-height: 18px; white-space: nowrap; }
.times li::before { content: ""; display: block; width: 1px; height: 3px; margin: 0 0 -3px 1px; background: #ee82ee; }
.cursor-time { position: absolute; left: 1055px; top: 3px; width: 80px; height: 11px; line-height: 11px; text-align: center; white-space: nowrap; background: #fff; color: #000; }

.ticket { position: absolute; left: 16px; top: 190px; width: 202px; height: 89px; padding: 1px; background: #1e90ff; font: 10px/14px "Liberation Sans", sans-serif; color: #111; }
.ticket-row { display: flex; gap: 4px; height: 16px; margin-bottom: 2px; }
.ticket-row.first { height: 17px; margin-top: 13px; }
.ticket-row.pair { gap: 1px; height: 18px; margin-bottom: 1px; }
.ticket-row button { flex: 1; border: 1px solid #444; border-radius: 2px; }
.ticket-row .small { flex: 0 0 16px; }
.sell { background: #ff0000; }
.buy { background: #32cd32; }
.blue { background: #0000ff; }
.field { flex: 0 0 75px; display: flex; padding: 2px 0 0 3px; background: #fff; color: #888; }
.field input { width: 46px; height: 14px; border: 0; padding: 0; background: none; text-align: center; font: inherit; color: #444; }

.order { position: absolute; left: 6px; white-space: nowrap; }
.order.tp { top: 352px; }
.order.open { top: 434px; opacity: .6; }
.order.sl { top: 474px; opacity: .45; }
.order.ghost { top: 528px; left: 12px; color: #555; }
.countdowns { position: absolute; left: 10px; top: 464px; font: 12px/17px "Liberation Sans", sans-serif; color: #ffa500; white-space: pre; }
.countdowns .late { color: #ff0000; }

.frames { position: absolute; left: 777px; top: 309px; display: grid; grid-template-columns: 50px auto; font: 6px/11px "Liberation Sans", sans-serif; }
.frames dt { color: #d98e78; font-weight: 700; }
.frames dd { color: #666; }
.position { position: absolute; left: 927px; top: 446px; display: flex; font: 11px/11px "Liberation Sans", sans-serif; color: #fff; }
.position span { height: 13px; border: 1px solid #a8d8c0; background: #00a000; padding: 0 3px; white-space: nowrap; }
.position span:last-child { padding: 0 1px; }
.position i { font-style: normal; color: #b8c030; }
.expert { position: absolute; right: 4px; top: 2px; display: flex; align-items: center; gap: 1px; }
.headline { position: absolute; right: 55px; top: 7px; font: 900 26px/34px Impact, Roboto, sans-serif; color: #00ffff; white-space: nowrap; }
.weekday { position: absolute; right: 9px; top: 18px; font: 12px/14px "Liberation Mono", monospace; color: #b0b0a8; }
.pane-name { position: absolute; left: 4px; top: 2px; white-space: nowrap; }

.dialog { position: absolute; background: #f0f0f0; border: 1px solid #555; box-shadow: 2px 3px 10px rgba(0, 0, 0, .5); }
.dialog header { display: flex; align-items: center; height: 30px; padding-bottom: 3px; background: #fff; }
.dialog h2 { flex: 1; font: 12px/20px Roboto, sans-serif; }
.help { width: 20px; font: 14px/20px "Open Sans", sans-serif; }
.close { width: 45px; height: 27px; display: grid; place-items: center; margin-left: 12px; }
.push { height: 21px; border: 1px solid #adadad; background: #e1e1e1; line-height: 18px; }
.side { display: flex; flex-direction: column; }

.list-dialog { left: 16px; top: 52px; width: 406px; height: 235px; }
.list-dialog header { padding-left: 7px; color: #8f8f8f; }
.list-dialog h2 { margin-left: 5px; }
.list-body { display: flex; gap: 9px; padding: 7px 8px 10px 7px; }
.list-body .side { flex: 1; padding-top: 1px; gap: 7px; }
.bottom { margin-top: auto; }
.tree { display: flex; width: 287px; height: 187px; border: 1px solid #828790; background: #fff; padding: 1px; }
.tree ul { flex: 1; margin-left: 12px; }
.tree li { display: flex; align-items: center; gap: 3px; height: 18px; border-left: 1px dotted #888; }
.tree li.closed { border-left-color: transparent; }
.item::before { content: ""; width: 10px; height: 18px; margin-left: 21px; border-left: 1px dotted #888; background: linear-gradient(90deg, #999 50%, transparent 50%) 0 9px / 2px 1px repeat-x; }
.item.last::before { height: 10px; align-self: flex-start; }
.item svg { margin-left: -1px; }
.fold { width: 9px; height: 9px; margin: 0 5px 0 -5px; border: 1px solid #999; background: linear-gradient(#3a5a99, #3a5a99) center / 5px 1px no-repeat #fff; }
.node { padding: 0 3px 0 1px; line-height: 17px; white-space: nowrap; }
.node.selected { background: #f0f0f0; }
.scrollbar { display: flex; flex-direction: column; align-items: center; width: 15px; padding: 7px 0; background: #f0f0f0; }
.thumb { width: 15px; height: 135px; margin: auto 0 4px; background: #cdcdcd; }

.input-dialog { left: 108px; top: 389px; width: 605px; height: 371px; border-color: #333; }
.input-dialog header { padding-left: 8px; }
.tabs { display: flex; align-items: flex-end; height: 27px; padding-left: 8px; }
.tabs button { height: 18px; padding: 0 4px 0 5px; border: 1px solid #d9d9d9; border-left-width: 0; line-height: 17px; }
.tabs button:first-child { border-left-width: 1px; }
.tabs .active { height: 21px; margin-bottom: -1px; padding-bottom: 3px; background: #fff; border-bottom: 0; }
.sheet { display: flex; gap: 8px; height: 277px; margin: 0 6px; padding: 8px 9px 9px 11px; border: 1px solid #d9d9d9; background: #fff; }
.grid { flex: 1; border: 1px solid #828790; padding: 1px 1px 0; }
table { width: 100%; border-collapse: collapse; table-layout: fixed; }
th { height: 24px; padding: 0 0 0 6px; font-weight: 400; text-align: left; }
td { height: 20px; padding: 0 3px 0; border-bottom: 1px solid #c8c8c8; white-space: nowrap; }
th:first-child, td:first-child { width: 226px; border-right: 1px solid #d9d9d9; }
td:first-child { padding-left: 1px; }
td svg { display: inline-block; vertical-align: middle; margin-right: 1px; }
tbody tr:nth-child(even) { background: #ebebeb; }
.page { fill: #9ecbf5; stroke: #3b7fc0; }
.fold-line, .glyph { fill: none; stroke: #0d3f7d; }
.real .page { fill: #8fe3ea; stroke: #3aa5b0; }
.real .glyph, .real .fold-line { stroke: #14707c; }
.sheet .side { width: 103px; justify-content: flex-end; gap: 12px; padding-bottom: 1px; margin-right: 1px; }
.input-dialog footer { position: relative; display: flex; justify-content: flex-end; gap: 8px; padding: 6px 9px 0 0; }
.input-dialog footer .push { width: 73px; }
.push.default { border: 2px solid #0078d7; line-height: 16px; }
.grip { position: absolute; right: 2px; top: 26px; width: 7px; height: 7px; background: radial-gradient(#b5b5b5 1px, transparent 1px) 0 0 / 3px 3px; }

.taskbar { display: flex; height: 40px; background: #101010; color: #fff; font-family: "Open Sans", sans-serif; }
.task { display: grid; place-items: center; width: 49px; height: 40px; }
.start { width: 48px; }
.search { display: flex; align-items: center; width: 344px; height: 40px; padding: 0 2px 0 9px; gap: 12px; border: 1px solid #666; background: #3d3d3d; }
.search input { flex: 1; min-width: 0; border: 0; padding: 0; background: none; font: 14px/20px "Open Sans", sans-serif; }
.search input::placeholder { color: #d0d0d0; opacity: 1; }
.view { width: 46px; }
.mail { width: 56px; }
.music { width: 44px; }
.files { width: 52px; }
.opera { width: 40px; margin: 0 4px 0 3px; background: #8f1313; border-bottom: 2px solid #ff0000; }
.current { background: #333; border-bottom: 2px solid #76b9ed; }
.tray { display: flex; align-items: center; gap: 10px; margin-left: auto; padding-right: 4px; }
.people { margin-right: 98px; }
.weather { font-size: 14px; line-height: 20px; }
.clock { width: 54px; text-align: center; font-size: 11px; line-height: 18px; }
.notice { position: relative; width: 37px; margin-left: 5px; border-right: 1px solid #555; height: 40px; padding-top: 12px; }
.notice b { position: absolute; left: 7px; top: 18px; width: 17px; height: 17px; border: 1px solid #888; border-radius: 50%; background: #333; font-size: 11px; line-height: 15px; text-align: center; }
</style>
